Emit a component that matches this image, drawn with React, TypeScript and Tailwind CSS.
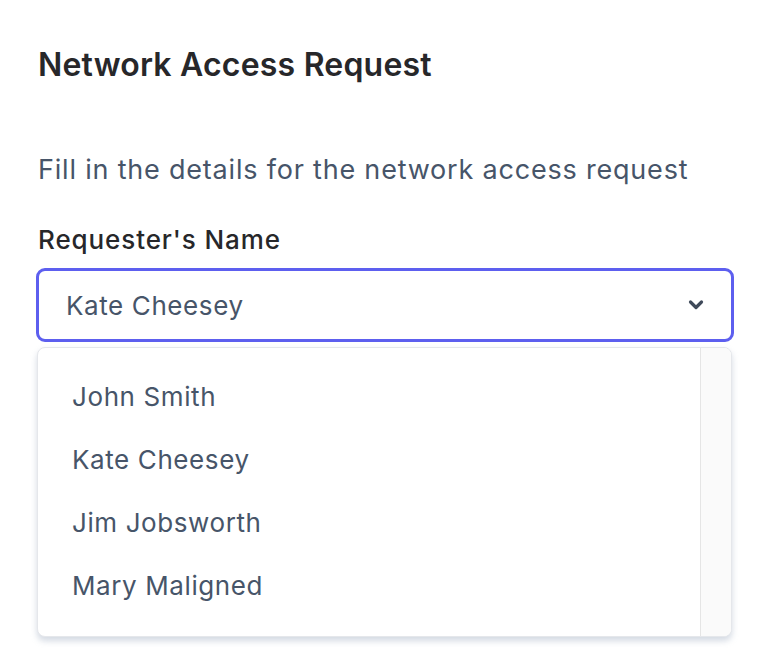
import React from "react";

const names = ["John Smith", "Kate Cheesey", "Jim Jobsworth", "Mary Maligned"];

export default function App() {
  return (
    <div className="w-[762px] h-[658px] bg-white overflow-hidden" style={{ fontFamily: "Inter, 'Noto Sans', sans-serif" }}>
      <div className="pl-[38px] pr-[28px] pt-[46px]">
        <h1 className="text-[32px] leading-[38px] font-semibold text-[#27272a] tracking-[0.2px]">Network Access Request</h1>
        <p className="mt-[69px] text-[27px] leading-[34px] text-[#475569] tracking-[0.8px]">Fill in the details for the network access request</p>
        <label className="block mt-[37px] text-[26px] leading-[32px] font-medium text-[#27272a] tracking-[0.9px]">Requester's Name</label>
        <div className="mt-[12px] -ml-[2px] h-[74px] w-[698px] border-[3px] border-[#5d5fef] rounded-[9px] flex items-center justify-between pl-[27px] pr-[26px]">
          <span className="text-[26px] text-[#475569] tracking-[0.6px]">Kate Cheesey</span>
          <svg width="18" height="12" viewBox="0 0 18 12" className="text-[#3f4a5a]">
            <path d="M3.5 3 L9 8.5 L14.5 3" fill="none" stroke="currentColor" strokeWidth="3.2" strokeLinecap="round" strokeLinejoin="round" />
          </svg>
        </div>
        <div className="mt-[5px] -ml-[1px] w-[695px] h-[290px] rounded-[8px] border border-[#e5e7eb] bg-white shadow-[0_4px_6px_rgba(148,163,184,0.4)] flex overflow-hidden">
          <div className="flex-1 flex flex-col pt-[17px] pl-[34px]">
            {names.map((n) => (
              <div key={n} className="h-[63px] flex items-center text-[26px] text-[#475569] tracking-[0.6px]">
                {n}
              </div>
            ))}
          </div>
          <div className="w-[31px] bg-[#fafafa] border-l border-[#e5e5e5]" />
        </div>
      </div>
    </div>
  );
}
